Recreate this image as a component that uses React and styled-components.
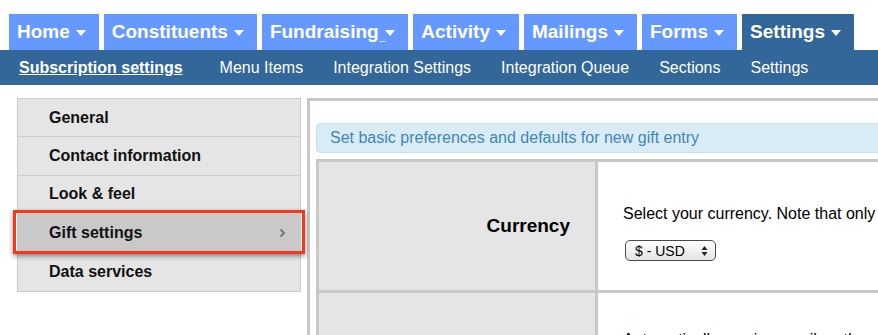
import React from "react";
import styled, { createGlobalStyle } from "styled-components";

const GlobalStyle = createGlobalStyle`
 html, body {
 margin: 0;
 padding: 0;
 background: #fff;
 overflow: hidden;
 font-family: "Liberation Sans", Arial, Helvetica, sans-serif;
 }
`;

const Page = styled.div`
 width: 878px;
 height: 335px;
 overflow: hidden;
`;

const TopNav = styled.div`
 display: flex;
 gap: 5px;
 padding: 14px 0 0 9px;
`;

const TopTab = styled.div`
 display: flex;
 align-items: center;
 height: 36px;
 padding: 0 13px 0 8px;
 background: ${(props) => (props.active ? "#336699" : "#6699ff")};
 color: #fff;
 font-weight: bold;
 font-size: 19px;
 white-space: nowrap;
`;

const Underscore = styled.span`
 font-size: 12px;
 align-self: center;
 margin-top: 8px;
`;

const Caret = styled.span`
 width: 0;
 height: 0;
 margin-left: ${(props) => (props.tight ? "0" : "6px")};
 margin-top: 2px;
 border-left: 5.5px solid transparent;
 border-right: 5.5px solid transparent;
 border-top: 6px solid #fff;
`;

const SubNav = styled.div`
 display: flex;
 align-items: center;
 gap: 30px;
 height: 35px;
 padding-left: 19px;
 background: #336699;
`;

const SubLink = styled.span`
 color: #fff;
 font-size: 16px;
 white-space: nowrap;
 font-weight: ${(props) => (props.active ? "bold" : "normal")};
 text-decoration: ${(props) => (props.active ? "underline" : "none")};
 margin-right: ${(props) => (props.active ? "7px" : "0")};
`;

const Body = styled.div`
 display: flex;
 gap: 6px;
 padding: 13px 0 0 17px;
`;

const Sidebar = styled.div`
 flex: 0 0 284px;
 align-self: flex-start;
 box-sizing: border-box;
 border: 1px solid #cbcbcb;
 background: #e5e5e5;
`;

const SideItem = styled.div`
 position: relative;
 display: flex;
 align-items: center;
 justify-content: space-between;
 height: 38.4px;
 box-sizing: border-box;
 padding: 0 14px 0 31px;
 border-bottom: ${(props) => (props.last ? "none" : "1px solid #cfcfcf")};
 background: ${(props) => (props.selected ? "#c9c9c9" : "transparent")};
 color: #111;
 font-weight: bold;
 font-size: 16px;
`;

const Highlight = styled.span`
 position: absolute;
 left: -5px;
 right: -5px;
 top: -4px;
 bottom: -2px;
 border: 3px solid #f5391c;
 box-shadow: 0 2px 5px rgba(0, 0, 0, 0.45);
 pointer-events: none;
`;

const Main = styled.div`
 flex: 0 0 640px;
 height: 260px;
 border-top: 3px solid #c8c8c8;
 border-left: 3px solid #c8c8c8;
 padding: 22px 0 0 6px;
`;

const InfoBar = styled.div`
 display: flex;
 align-items: center;
 height: 30px;
 box-sizing: border-box;
 padding-left: 13px;
 border: 1px solid #bfe3f0;
 border-radius: 4px;
 background: #d9ecf6;
 color: #3f87b3;
 font-size: 16px;
`;

const Table = styled.div`
 margin-top: 6px;
 border-top: 3px solid #c8c8c8;
 border-left: 3px solid #c8c8c8;
`;

const Row = styled.div`
 display: grid;
 grid-template-columns: 279px 1fr;
 height: ${(props) => props.h}px;
 border-bottom: 3px solid #c8c8c8;
`;

const Label = styled.div`
 display: flex;
 align-items: center;
 justify-content: flex-end;
 padding-right: 25px;
 background: #e5e5e5;
 border-right: 3px solid #c8c8c8;
 color: #000;
 font-weight: bold;
 font-size: 19px;
`;

const Cell = styled.div`
 padding: ${(props) => props.top}px 0 0 25px;
 color: #000;
 font-size: 16px;
 white-space: nowrap;
`;

const FakeSelect = styled.div`
 display: inline-flex;
 align-items: center;
 justify-content: space-between;
 margin: 17px 0 0 2px;
 width: 91px;
 height: 21px;
 box-sizing: border-box;
 padding: 0 7px 0 9px;
 border: 1px solid #4a4a4a;
 border-radius: 5px;
 background: linear-gradient(#ffffff, #e4e4e4);
 font-size: 14px;
 color: #000;
`;

const Chevron = () => (
  <svg width="7" height="10" viewBox="0 0 7 10">
    <polyline points="1.5,1.5 5,5 1.5,8.5" fill="none" stroke="#777" strokeWidth="2" />
  </svg>
);

const Updown = () => (
  <svg width="7" height="12" viewBox="0 0 7 12">
    <polygon points="3.5,1 6.5,5 0.5,5" fill="#222" />
    <polygon points="0.5,7 6.5,7 3.5,11" fill="#222" />
  </svg>
);

const tabs = ["Home", "Constituents", "Fundraising", "Activity", "Mailings", "Forms", "Settings"];
const subLinks = ["Subscription settings", "Menu Items", "Integration Settings", "Integration Queue", "Sections", "Settings"];
const sideItems = ["General", "Contact information", "Look & feel", "Gift settings", "Data services"];

export default function App() {
  return (
    <Page>
      <GlobalStyle />
      <TopNav>
        {tabs.map((t) => (
          <TopTab key={t} active={t === "Settings"}>
            {t}
            {t === "Fundraising" && <Underscore>_</Underscore>}
            <Caret tight={t === "Fundraising"} />
          </TopTab>
        ))}
      </TopNav>
      <SubNav>
        {subLinks.map((s, i) => (
          <SubLink key={s + i} active={i === 0}>
            {s}
          </SubLink>
        ))}
      </SubNav>
      <Body>
        <Sidebar>
          {sideItems.map((s, i) => (
            <SideItem key={s} selected={s === "Gift settings"} last={i === sideItems.length - 1}>
              {s}
              {s === "Gift settings" && (
                <>
                  <Chevron />
                  <Highlight />
                </>
              )}
            </SideItem>
          ))}
        </Sidebar>
        <Main>
          <InfoBar>Set basic preferences and defaults for new gift entry</InfoBar>
          <Table>
            <Row h={128}>
              <Label>Currency</Label>
              <Cell top={43}>
                <div>Select your currency. Note that only</div>
                <FakeSelect>
                  <span>$ - USD</span>
                  <Updown />
                </FakeSelect>
              </Cell>
            </Row>
            <Row h={128}>
              <Label />
              <Cell top={38}>Automatically receive email on the</Cell>
            </Row>
          </Table>
        </Main>
      </Body>
    </Page>
  );
}
